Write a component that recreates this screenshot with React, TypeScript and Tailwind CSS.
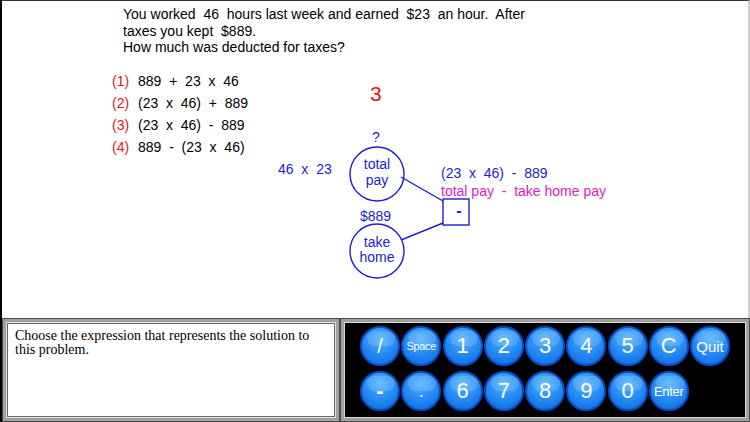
import React from "react";

function Key({ label, cls }: { label: string; cls: string }) {
  return (
    <div className="relative w-[40px] h-[40px] shrink-0 rounded-full border-2 border-[#0a4cc4] bg-[radial-gradient(circle_at_50%_30%,#4fb2ff_0%,#2a8ff5_45%,#1474ea_80%,#0c60da_100%)] flex items-center justify-center text-white">
      <div className="absolute top-[3px] left-[5px] w-[28px] h-[15px] rounded-full bg-white/15" />
      <span className={"relative leading-none " + cls}>{label}</span>
    </div>
  );
}

const row1: [string, string][] = [
  ["/", "text-[20px]"],
  ["Space", "text-[11px] tracking-[-0.3px]"],
  ["1", "text-[22px]"],
  ["2", "text-[22px]"],
  ["3", "text-[22px]"],
  ["4", "text-[22px]"],
  ["5", "text-[22px]"],
  ["C", "text-[22px]"],
  ["Quit", "text-[15px]"],
];
const row2: [string, string][] = [
  ["-", "text-[22px] font-bold"],
  [".", "text-[18px]"],
  ["6", "text-[22px]"],
  ["7", "text-[22px]"],
  ["8", "text-[22px]"],
  ["9", "text-[22px]"],
  ["0", "text-[22px]"],
  ["Enter", "text-[13px] tracking-[-0.3px]"],
];

const choices = [
  ["(1)", "889  +  23  x  46"],
  ["(2)", "(23  x  46)  +  889"],
  ["(3)", "(23  x  46)  -  889"],
  ["(4)", "889  -  (23  x  46)"],
];

export default function App() {
  return (
    <div className="w-[750px] h-[422px] bg-white overflow-hidden flex flex-col font-['Liberation_Sans',Arial,sans-serif]">
      {/* top work area */}
      <div className="relative h-[318px] border-l-2 border-l-black border-t border-t-[#333] border-r-2 border-r-[#d0d0d0] text-[14px] text-black">
        <div className="pl-[121px] pt-[5px] leading-[16.5px] whitespace-pre">
          <div>You worked  46  hours last week and earned  $23  an hour.  After</div>
          <div>taxes you kept  $889.</div>
          <div>How much was deducted for taxes?</div>
        </div>
        <div className="mt-[15px] pl-[110px] flex flex-col">
          {choices.map(([n, e]) => (
            <div key={n} className="h-[22px] flex items-center whitespace-pre">
              <span className="text-[#e2141c] w-[26px]">{n}</span>
              <span>{e}</span>
            </div>
          ))}
        </div>

        {/* answer */}
        <div className="absolute left-[368px] top-[82px] text-[21px] text-[#e8141c] leading-none">3</div>

        {/* diagram */}
        <svg className="absolute left-0 top-0" width="750" height="318" viewBox="0 0 750 318">
          <g transform="translate(-2,-1)" fill="none" stroke="#1e1ecf" strokeWidth="1.4">
            <circle cx="377" cy="174" r="27" />
            <circle cx="377" cy="251" r="27" />
            <rect x="443" y="199" width="26" height="26" />
            <line x1="401" y1="177" x2="443" y2="201" />
            <line x1="401" y1="240" x2="443" y2="223" />
          </g>
        </svg>
        <div className="absolute left-[370px] top-[129px] text-[14px] text-[#1e1ecf] leading-none">?</div>
        <div className="absolute left-[276px] top-[161px] text-[14px] text-[#1e1ecf] leading-none whitespace-pre">46  x  23</div>
        <div className="absolute left-[348px] top-[155px] w-[54px] text-center text-[14px] text-[#1e1ecf] leading-[16px]">
          <div>total</div>
          <div>pay</div>
        </div>
        <div className="absolute left-[358px] top-[208px] text-[14px] text-[#1e1ecf] leading-none">$889</div>
        <div className="absolute left-[348px] top-[234px] w-[54px] text-center text-[14px] text-[#1e1ecf] leading-[15px]">
          <div>take</div>
          <div>home</div>
        </div>
        <div className="absolute left-[449px] top-[202px] w-[16px] text-center text-[16px] font-bold text-[#1e1ecf] leading-none">-</div>
        <div className="absolute left-[439px] top-[165px] text-[14px] text-[#1e1ecf] leading-none whitespace-pre">(23  x  46)  -  889</div>
        <div className="absolute left-[439px] top-[183px] text-[14px] text-[#e619c4] leading-none whitespace-pre">total pay  -  take home pay</div>
      </div>

      {/* bottom panels */}
      <div className="h-[104px] flex bg-[#2a2a2a] border-l-2 border-l-black">
        <div className="w-[338px] h-full border border-[#4a4a4a] bg-[#a0a0a0] p-[3px]">
          <div className="h-full border border-[#e0e0e0] shadow-[inset_0_0_0_1px_#6a6a6a] bg-white px-[8px] pt-[6px] font-['Liberation_Serif','Times_New_Roman',serif] text-[14px] leading-[14px] text-black">
            Choose the expression that represents the solution to this problem.
          </div>
        </div>
        <div className="w-[410px] h-full border border-[#4a4a4a] bg-[#a0a0a0] p-[3px]">
          <div className="h-full border border-[#d8d8d8] bg-black pl-[15px] pt-[3px] flex flex-col gap-[5px]">
            <div className="flex gap-[1.25px]">
              {row1.map(([l, c]) => (
                <Key key={l} label={l} cls={c} />
              ))}
            </div>
            <div className="flex gap-[1.25px]">
              {row2.map(([l, c]) => (
                <Key key={l} label={l} cls={c} />
              ))}
            </div>
          </div>
        </div>
      </div>
    </div>
  );
}
